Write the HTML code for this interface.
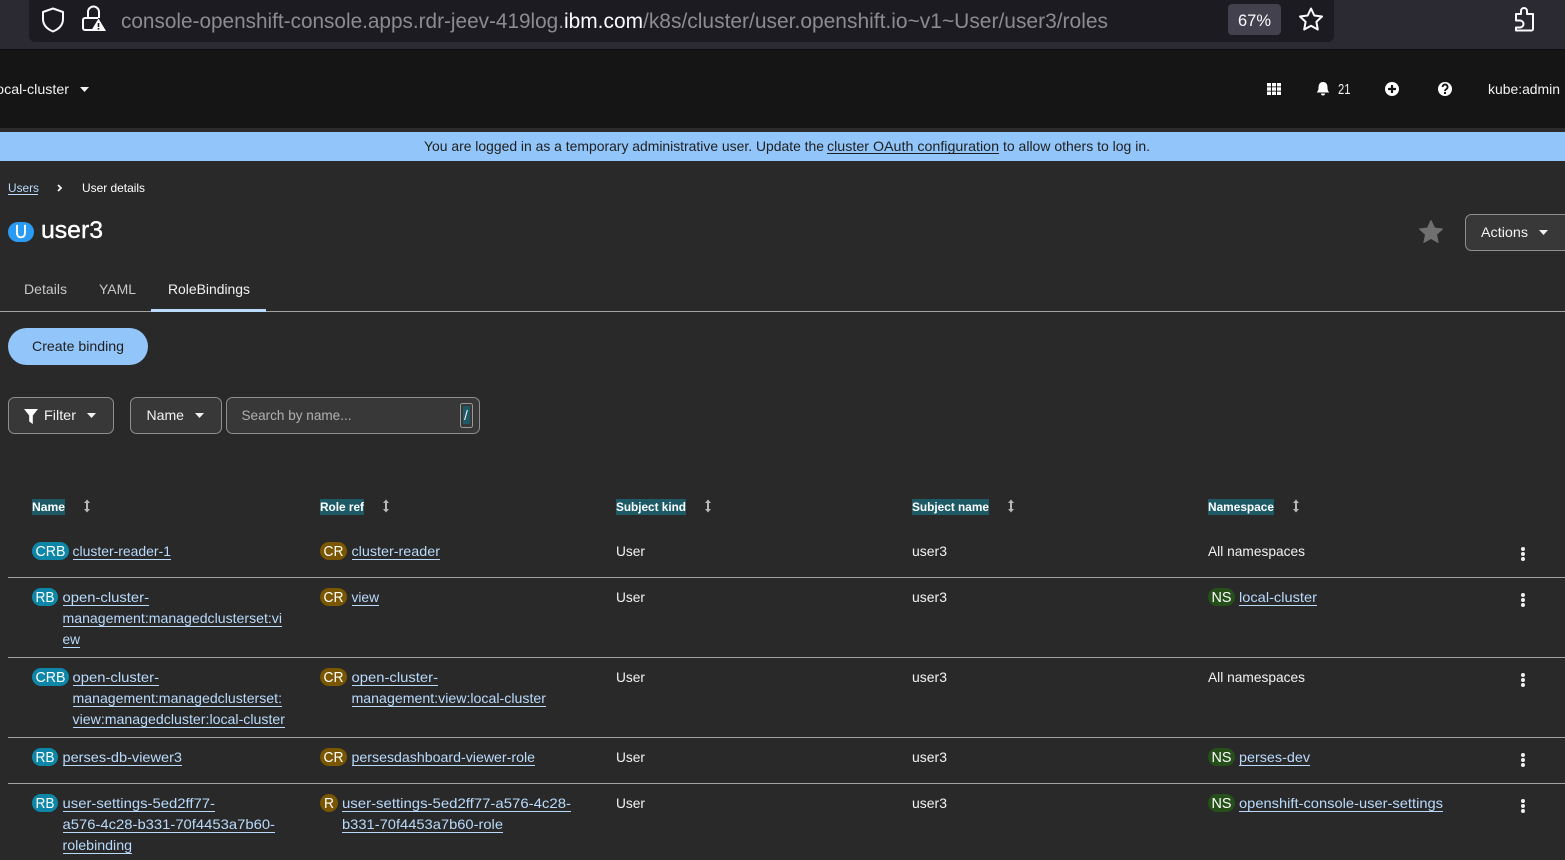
<!DOCTYPE html>
<html lang="en">
<head>
<meta charset="utf-8">
<title>user3 RoleBindings</title>
<style>
html,body{margin:0;padding:0;background:#292929;width:1565px;height:860px;overflow:hidden}
svg{display:block;position:absolute;left:0;top:0}
text{font-family:"Liberation Sans",sans-serif;font-size:14px;fill:#f2f2f2;white-space:pre}
.u{font-size:21px;fill:#8b8b90}
.l{fill:#b9dafc}
.d{fill:#1f1f1f}
.h{font-size:12px;font-weight:bold;fill:#fff}
.b{fill:#fff;font-size:15px}
</style>
</head>
<body>
<svg width="1565" height="860" viewBox="0 0 1565 860" xmlns="http://www.w3.org/2000/svg">
<defs>
<g id="keb" fill="#f0f0f0"><circle cx="0" cy="-5" r="2"/><circle cx="0" cy="0" r="2"/><circle cx="0" cy="5" r="2"/></g>
<g id="srt" fill="#b8b8b8"><path d="M-1 -3.500h2v7h-2z"/><path d="M-3 -3h6l-3-3.500z"/><path d="M-3 3h6l-3 3.500z"/></g>
</defs>

<rect width="1565" height="860" fill="#292929"/>

<!-- browser chrome -->
<rect width="1565" height="49" fill="#2b2a33"/>
<rect y="49" width="1565" height="1" fill="#0c0c0d"/>
<path d="M29 0H1334V36a6 6 0 0 1-6 6H35a6 6 0 0 1-6-6z" fill="#1c1b22"/>
<path d="M53 8.500l10 3.500v7c0 6-4 10-10 12.500c-6-2.500-10-6.500-10-12.500v-7z" fill="none" stroke="#fbfbfe" stroke-width="2" stroke-linejoin="round"/>
<path d="M88 18v-6a5.500 5.500 0 0 1 11 0v6" fill="none" stroke="#fbfbfe" stroke-width="2"/>
<path d="M92 30h-7a2 2 0 0 1-2-2v-8a2 2 0 0 1 2-2h13" fill="none" stroke="#fbfbfe" stroke-width="2"/>
<path d="M98.500 18.500l7.500 12.500h-15z" fill="#fbfbfe"/>
<rect x="97.700" y="23" width="1.600" height="4" fill="#1c1b22"/>
<rect x="97.700" y="28" width="1.600" height="1.600" fill="#1c1b22"/>
<text class="u" x="121" y="28" textLength="443" lengthAdjust="spacingAndGlyphs">console-openshift-console.apps.rdr-jeev-419log.</text>
<text class="u" x="564" y="28" textLength="79" lengthAdjust="spacingAndGlyphs" style="fill:#fbfbfe">ibm.com</text>
<text class="u" x="643" y="28" textLength="465" lengthAdjust="spacingAndGlyphs">/k8s/cluster/user.openshift.io~v1~User/user3/roles</text>
<rect x="1228" y="4" width="53" height="31" rx="4" fill="#42414d"/>
<text x="1238" y="26" textLength="33" lengthAdjust="spacingAndGlyphs" style="font-size:17px;fill:#fbfbfe">67%</text>
<path d="M1311 8.500l3.300 7 7.700 1-5.600 5.300 1.400 7.700-6.800-3.700-6.800 3.700 1.400-7.700-5.600-5.300 7.700-1z" fill="none" stroke="#fbfbfe" stroke-width="2" stroke-linejoin="round"/>
<path d="M1516 14h5v-3a3 3 0 0 1 6 0v3h6v15a1.500 1.500 0 0 1-1.500 1.500H1516v-3h4a3 3 0 0 0 0-7h-4z" fill="none" stroke="#fbfbfe" stroke-width="2" stroke-linejoin="round"/>

<!-- masthead -->
<rect y="50" width="1565" height="78" fill="#151515"/>
<rect y="128" width="1565" height="4" fill="#2b2b2b"/>
<text x="-7" y="94" textLength="76" lengthAdjust="spacingAndGlyphs">local-cluster</text>
<path d="M80 87h9l-4.500 5z" fill="#f2f2f2"/>
<g fill="#fff">
<rect x="1267" y="83" width="4" height="3.400"/><rect x="1272" y="83" width="4" height="3.400"/><rect x="1277" y="83" width="4" height="3.400"/>
<rect x="1267" y="87.300" width="4" height="3.400"/><rect x="1272" y="87.300" width="4" height="3.400"/><rect x="1277" y="87.300" width="4" height="3.400"/>
<rect x="1267" y="91.600" width="4" height="3.400"/><rect x="1272" y="91.600" width="4" height="3.400"/><rect x="1277" y="91.600" width="4" height="3.400"/>
<path d="M1323 82c3 0 4.500 2.300 4.500 5.500c0 2.500 .6 3.500 1.800 5h-12.600c1.200-1.500 1.800-2.500 1.800-5c0-3.200 1.500-5.500 4.500-5.500z"/>
<path d="M1321 93.500h4a2 2 0 0 1-4 0z"/>
<circle cx="1392" cy="89" r="7"/>
<circle cx="1445" cy="89" r="7"/>
</g>
<path d="M1392 85v8M1388 89h8" stroke="#151515" stroke-width="2.200"/>
<path d="M1442.600 87a2.500 2.500 0 1 1 3.800 2.100c-1 .6-1.400 1-1.400 2" fill="none" stroke="#151515" stroke-width="1.800"/>
<rect x="1444" y="92" width="2" height="2" fill="#151515"/>
<text x="1338" y="94" textLength="12.500" lengthAdjust="spacingAndGlyphs" style="font-size:15px">21</text>
<text x="1488" y="94" textLength="72" lengthAdjust="spacingAndGlyphs">kube:admin</text>

<!-- banner -->
<rect y="132" width="1565" height="29" fill="#92c5f9"/>
<text class="d" x="424" y="151" textLength="400" lengthAdjust="spacingAndGlyphs">You are logged in as a temporary administrative user. Update the</text>
<text class="d" x="827" y="151" textLength="172" lengthAdjust="spacingAndGlyphs">cluster OAuth configuration</text>
<text class="d" x="1003" y="151" textLength="147" lengthAdjust="spacingAndGlyphs">to allow others to log in.</text>
<rect x="827" y="153" width="172" height="1" fill="#1f1f1f"/>

<!-- breadcrumb -->
<text class="l" x="8" y="192" textLength="31" lengthAdjust="spacingAndGlyphs" style="font-size:12px">Users</text>
<rect x="8" y="194" width="30" height="1" fill="#b9dafc"/>
<path d="M58 185l3 3-3 3" fill="none" stroke="#f2f2f2" stroke-width="1.800"/>
<text x="82" y="192" textLength="63" lengthAdjust="spacingAndGlyphs" style="font-size:12px;fill:#fff">User details</text>

<!-- title -->
<rect x="8" y="222" width="26" height="20" rx="10" fill="#2b9af3"/>
<text x="15" y="238" textLength="12" lengthAdjust="spacingAndGlyphs" style="font-size:18px;fill:#fff;stroke:#fff;stroke-width:.3">U</text>
<text x="41" y="238" textLength="62" lengthAdjust="spacingAndGlyphs" style="font-size:24px;fill:#fff;stroke:#fff;stroke-width:.4">user3</text>
<path d="M1431 220.500l3.500 7.500 8 1-6 5.500 1.600 8-7.100-4-7.100 4 1.600-8-6-5.500 8-1z" fill="#707070" stroke="#707070" stroke-linejoin="round"/>
<rect x="1465.500" y="214.500" width="110" height="36" rx="6" fill="#383838" stroke="#8f8f8f"/>
<text x="1481" y="237" textLength="47" lengthAdjust="spacingAndGlyphs">Actions</text>
<path d="M1539 230h9l-4.500 5z" fill="#f2f2f2"/>

<!-- tabs -->
<text x="24" y="294" textLength="43" lengthAdjust="spacingAndGlyphs" style="fill:#c7c7c7">Details</text>
<text x="99" y="294" textLength="37" lengthAdjust="spacingAndGlyphs" style="fill:#c7c7c7">YAML</text>
<text x="168" y="294" textLength="82" lengthAdjust="spacingAndGlyphs">RoleBindings</text>
<rect y="311" width="1565" height="1" fill="#a3a3a3"/>
<rect x="151" y="309" width="115" height="3" fill="#b9dafc"/>

<!-- create -->
<rect x="8" y="328" width="140" height="37" rx="18.500" fill="#92c5f9"/>
<text class="d" x="32" y="351" textLength="92" lengthAdjust="spacingAndGlyphs">Create binding</text>

<!-- toolbar -->
<rect x="8.500" y="397.500" width="105" height="36" rx="6" fill="#383838" stroke="#8f8f8f"/>
<path d="M24 409h14l-5.200 6.500v8.500l-3.600-2.500v-6z" fill="#fff"/>
<text x="44" y="420" textLength="32" lengthAdjust="spacingAndGlyphs">Filter</text>
<path d="M87 413h9l-4.500 5z" fill="#f2f2f2"/>
<rect x="130.500" y="397.500" width="91" height="36" rx="6" fill="#383838" stroke="#8f8f8f"/>
<text x="146.500" y="420" textLength="37.500" lengthAdjust="spacingAndGlyphs">Name</text>
<path d="M195 413h9l-4.500 5z" fill="#f2f2f2"/>
<rect x="226.500" y="397.500" width="253" height="36" rx="6" fill="#383838" stroke="#8f8f8f"/>
<text x="241.500" y="420" textLength="110" lengthAdjust="spacingAndGlyphs" style="fill:#b0b0b0">Search by name...</text>
<rect x="460.500" y="403.500" width="12" height="24" rx="2" fill="#383838" stroke="#9a9a9a"/>
<rect x="463" y="406" width="7" height="18" fill="#1e5a66"/>
<text x="464" y="420">/</text>

<!-- table header -->
<rect x="32" y="499" width="33" height="16" fill="#1e5a66"/>
<text class="h" x="32" y="511" textLength="33" lengthAdjust="spacingAndGlyphs">Name</text>
<use href="#srt" x="87" y="506"/>
<rect x="320" y="499" width="44" height="16" fill="#1e5a66"/>
<text class="h" x="320" y="511" textLength="44" lengthAdjust="spacingAndGlyphs">Role ref</text>
<use href="#srt" x="386" y="506"/>
<rect x="616" y="499" width="70" height="16" fill="#1e5a66"/>
<text class="h" x="616" y="511" textLength="70" lengthAdjust="spacingAndGlyphs">Subject kind</text>
<use href="#srt" x="708" y="506"/>
<rect x="912" y="499" width="77" height="16" fill="#1e5a66"/>
<text class="h" x="912" y="511" textLength="77" lengthAdjust="spacingAndGlyphs">Subject name</text>
<use href="#srt" x="1011" y="506"/>
<rect x="1208" y="499" width="66" height="16" fill="#1e5a66"/>
<text class="h" x="1208" y="511" textLength="66" lengthAdjust="spacingAndGlyphs">Namespace</text>
<use href="#srt" x="1296" y="506"/>

<!-- row lines -->
<rect x="8" y="577" width="1557" height="1" fill="#a3a3a3"/>
<rect x="8" y="657" width="1557" height="1" fill="#a3a3a3"/>
<rect x="8" y="737" width="1557" height="1" fill="#a3a3a3"/>
<rect x="8" y="783" width="1557" height="1" fill="#a3a3a3"/>

<!-- row 1 -->
<rect x="32" y="542" width="37" height="18" rx="9" fill="#0d86a8"/>
<text class="b" x="35.500" y="556" textLength="30" lengthAdjust="spacingAndGlyphs">CRB</text>
<text class="l" x="72.500" y="556" textLength="98.500" lengthAdjust="spacingAndGlyphs">cluster-reader-1</text>
<rect x="73" y="559" width="98" height="1" fill="#b9dafc"/>
<rect x="320" y="542" width="27" height="18" rx="9" fill="#7a5600"/>
<text class="b" x="323.500" y="556" textLength="20" lengthAdjust="spacingAndGlyphs">CR</text>
<text class="l" x="351.500" y="556" textLength="88.500" lengthAdjust="spacingAndGlyphs">cluster-reader</text>
<rect x="352" y="559" width="88" height="1" fill="#b9dafc"/>
<text x="616" y="556" textLength="29" lengthAdjust="spacingAndGlyphs">User</text>
<text x="912" y="556" textLength="35" lengthAdjust="spacingAndGlyphs">user3</text>
<text x="1208" y="556" textLength="97" lengthAdjust="spacingAndGlyphs">All namespaces</text>
<use href="#keb" x="1523" y="554"/>

<!-- row 2 -->
<rect x="32" y="588" width="26" height="18" rx="9" fill="#0d86a8"/>
<text class="b" x="35.500" y="602" textLength="19" lengthAdjust="spacingAndGlyphs">RB</text>
<text class="l" x="62.500" y="602" textLength="86.500" lengthAdjust="spacingAndGlyphs">open-cluster-</text>
<rect x="63" y="605" width="86" height="1" fill="#b9dafc"/>
<text class="l" x="62.500" y="623" textLength="219.500" lengthAdjust="spacingAndGlyphs">management:managedclusterset:vi</text>
<rect x="63" y="626" width="219" height="1" fill="#b9dafc"/>
<text class="l" x="62.500" y="644" textLength="17.500" lengthAdjust="spacingAndGlyphs">ew</text>
<rect x="63" y="647" width="17" height="1" fill="#b9dafc"/>
<rect x="320" y="588" width="27" height="18" rx="9" fill="#7a5600"/>
<text class="b" x="323.500" y="602" textLength="20" lengthAdjust="spacingAndGlyphs">CR</text>
<text class="l" x="351.500" y="602" textLength="27.500" lengthAdjust="spacingAndGlyphs">view</text>
<rect x="352" y="605" width="27" height="1" fill="#b9dafc"/>
<text x="616" y="602" textLength="29" lengthAdjust="spacingAndGlyphs">User</text>
<text x="912" y="602" textLength="35" lengthAdjust="spacingAndGlyphs">user3</text>
<rect x="1208" y="588" width="27" height="18" rx="9" fill="#25501a"/>
<text class="b" x="1211.500" y="602" textLength="20" lengthAdjust="spacingAndGlyphs">NS</text>
<text class="l" x="1239" y="602" textLength="78" lengthAdjust="spacingAndGlyphs">local-cluster</text>
<rect x="1239" y="605" width="78" height="1" fill="#b9dafc"/>
<use href="#keb" x="1523" y="600"/>

<!-- row 3 -->
<rect x="32" y="668" width="37" height="18" rx="9" fill="#0d86a8"/>
<text class="b" x="35.500" y="682" textLength="30" lengthAdjust="spacingAndGlyphs">CRB</text>
<text class="l" x="72.500" y="682" textLength="86.500" lengthAdjust="spacingAndGlyphs">open-cluster-</text>
<rect x="73" y="685" width="86" height="1" fill="#b9dafc"/>
<text class="l" x="72.500" y="703" textLength="209.500" lengthAdjust="spacingAndGlyphs">management:managedclusterset:</text>
<rect x="73" y="706" width="209" height="1" fill="#b9dafc"/>
<text class="l" x="72.500" y="724" textLength="212.500" lengthAdjust="spacingAndGlyphs">view:managedcluster:local-cluster</text>
<rect x="73" y="727" width="212" height="1" fill="#b9dafc"/>
<rect x="320" y="668" width="27" height="18" rx="9" fill="#7a5600"/>
<text class="b" x="323.500" y="682" textLength="20" lengthAdjust="spacingAndGlyphs">CR</text>
<text class="l" x="351.500" y="682" textLength="86.500" lengthAdjust="spacingAndGlyphs">open-cluster-</text>
<rect x="352" y="685" width="86" height="1" fill="#b9dafc"/>
<text class="l" x="351.500" y="703" textLength="194.500" lengthAdjust="spacingAndGlyphs">management:view:local-cluster</text>
<rect x="352" y="706" width="194" height="1" fill="#b9dafc"/>
<text x="616" y="682" textLength="29" lengthAdjust="spacingAndGlyphs">User</text>
<text x="912" y="682" textLength="35" lengthAdjust="spacingAndGlyphs">user3</text>
<text x="1208" y="682" textLength="97" lengthAdjust="spacingAndGlyphs">All namespaces</text>
<use href="#keb" x="1523" y="680"/>

<!-- row 4 -->
<rect x="32" y="748" width="26" height="18" rx="9" fill="#0d86a8"/>
<text class="b" x="35.500" y="762" textLength="19" lengthAdjust="spacingAndGlyphs">RB</text>
<text class="l" x="62.500" y="762" textLength="119.500" lengthAdjust="spacingAndGlyphs">perses-db-viewer3</text>
<rect x="63" y="765" width="119" height="1" fill="#b9dafc"/>
<rect x="320" y="748" width="27" height="18" rx="9" fill="#7a5600"/>
<text class="b" x="323.500" y="762" textLength="20" lengthAdjust="spacingAndGlyphs">CR</text>
<text class="l" x="351.500" y="762" textLength="183.500" lengthAdjust="spacingAndGlyphs">persesdashboard-viewer-role</text>
<rect x="352" y="765" width="183" height="1" fill="#b9dafc"/>
<text x="616" y="762" textLength="29" lengthAdjust="spacingAndGlyphs">User</text>
<text x="912" y="762" textLength="35" lengthAdjust="spacingAndGlyphs">user3</text>
<rect x="1208" y="748" width="27" height="18" rx="9" fill="#25501a"/>
<text class="b" x="1211.500" y="762" textLength="20" lengthAdjust="spacingAndGlyphs">NS</text>
<text class="l" x="1239" y="762" textLength="71" lengthAdjust="spacingAndGlyphs">perses-dev</text>
<rect x="1239" y="765" width="71" height="1" fill="#b9dafc"/>
<use href="#keb" x="1523" y="760"/>

<!-- row 5 -->
<rect x="32" y="794" width="26" height="18" rx="9" fill="#0d86a8"/>
<text class="b" x="35.500" y="808" textLength="19" lengthAdjust="spacingAndGlyphs">RB</text>
<text class="l" x="62.500" y="808" textLength="152.500" lengthAdjust="spacingAndGlyphs">user-settings-5ed2ff77-</text>
<rect x="63" y="811" width="152" height="1" fill="#b9dafc"/>
<text class="l" x="62.500" y="829" textLength="212.500" lengthAdjust="spacingAndGlyphs">a576-4c28-b331-70f4453a7b60-</text>
<rect x="63" y="832" width="212" height="1" fill="#b9dafc"/>
<text class="l" x="62.500" y="850" textLength="69.500" lengthAdjust="spacingAndGlyphs">rolebinding</text>
<rect x="63" y="853" width="69" height="1" fill="#b9dafc"/>
<rect x="320" y="794" width="18" height="18" rx="9" fill="#7a5600"/>
<text class="b" x="324" y="808" textLength="10" lengthAdjust="spacingAndGlyphs">R</text>
<text class="l" x="342" y="808" textLength="229" lengthAdjust="spacingAndGlyphs">user-settings-5ed2ff77-a576-4c28-</text>
<rect x="342" y="811" width="229" height="1" fill="#b9dafc"/>
<text class="l" x="342" y="829" textLength="161" lengthAdjust="spacingAndGlyphs">b331-70f4453a7b60-role</text>
<rect x="342" y="832" width="161" height="1" fill="#b9dafc"/>
<text x="616" y="808" textLength="29" lengthAdjust="spacingAndGlyphs">User</text>
<text x="912" y="808" textLength="35" lengthAdjust="spacingAndGlyphs">user3</text>
<rect x="1208" y="794" width="27" height="18" rx="9" fill="#25501a"/>
<text class="b" x="1211.500" y="808" textLength="20" lengthAdjust="spacingAndGlyphs">NS</text>
<text class="l" x="1239" y="808" textLength="204" lengthAdjust="spacingAndGlyphs">openshift-console-user-settings</text>
<rect x="1239" y="811" width="204" height="1" fill="#b9dafc"/>
<use href="#keb" x="1523" y="806"/>
</svg>
</body>
</html>
